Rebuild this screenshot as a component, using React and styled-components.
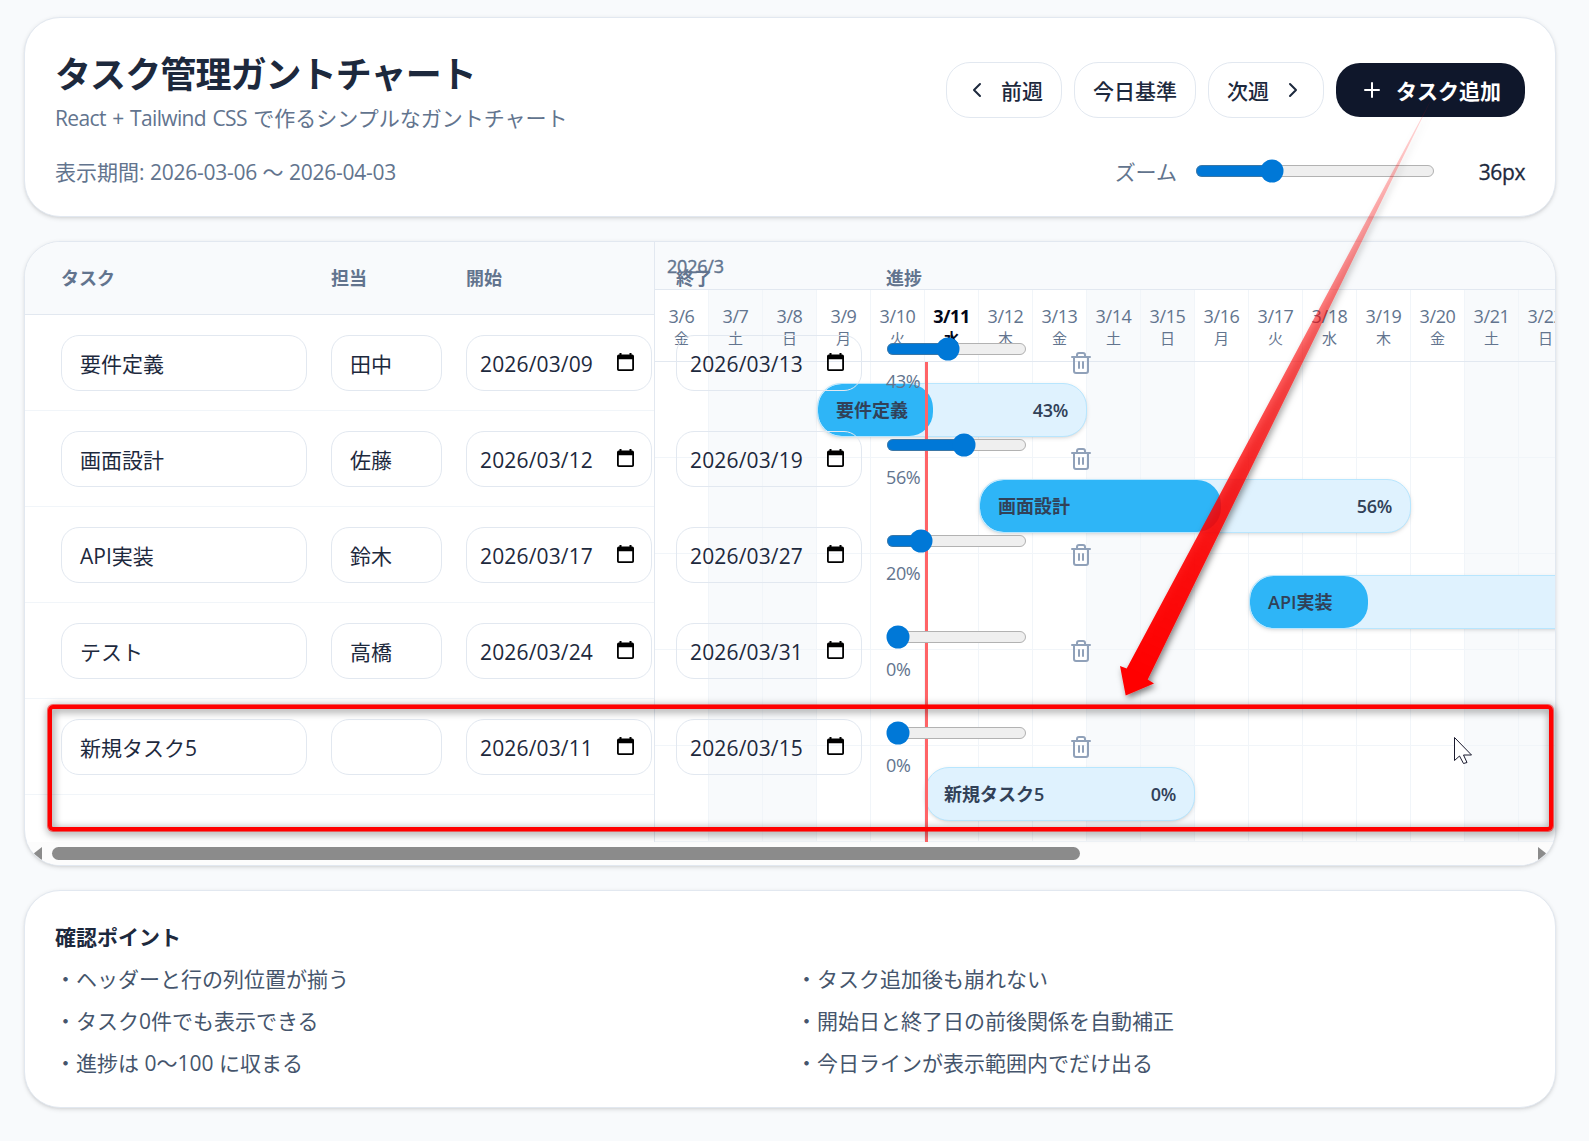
import { ChevronLeft, ChevronRight, Plus, Trash2 } from "lucide-react";
import styled, { createGlobalStyle, css } from "styled-components";

const DAY_WIDTH = 54;
const WEEKDAYS = ["日", "月", "火", "水", "木", "金", "土"];

const GlobalStyle = createGlobalStyle`
  * {
    box-sizing: border-box;
  }
  body {
    margin: 0;
    background-color: #f8fafc;
    color: #1d293d;
    font-family: "Open Sans", "Noto Sans CJK JP", sans-serif;
    font-size: 21px;
    line-height: 30px;
  }
`;

const Page = styled.main`
  position: relative;
  display: flex;
  flex-direction: column;
  gap: 24px;
  height: 1141px;
  padding: 17px 33px 0 24px;
  overflow: hidden;
`;

const Card = styled.section`
  flex-shrink: 0;
  background-color: #fff;
  border: 1px solid #e2e8f0;
  border-radius: 36px;
  box-shadow: 0 1.5px 4.5px rgba(0, 0, 0, 0.1),
    0 1.5px 3px -1.5px rgba(0, 0, 0, 0.1);
`;

const HeaderCard = styled(Card)`
  display: flex;
  flex-direction: column;
  gap: 24px;
  height: 200px;
  padding: 30px;
`;

const HeaderRow = styled.div`
  display: flex;
  align-items: center;
  justify-content: space-between;
`;

const Title = styled.h1`
  margin: 0;
  font-size: 36px;
  font-weight: 700;
  line-height: 54px;
  letter-spacing: -0.9px;
`;

const Muted = styled.p`
  margin: 0;
  padding-top: 2px;
  color: #62748e;
  line-height: 28px;
`;

const Latin = styled.span`
  letter-spacing: ${(props) => props.$spacing || "-0.25px"};
  word-spacing: ${(props) => props.$words || "0"};
`;

const Actions = styled.div`
  display: flex;
  align-items: center;
  gap: 12px;
`;

const Label = styled.span`
  padding-top: 2px;
  line-height: 28px;
`;

const Button = styled.button`
  display: flex;
  align-items: center;
  gap: 12px;
  height: 56px;
  padding: 0 18px;
  border: 1px solid #e2e8f0;
  border-radius: 24px;
  background-color: #fff;
  color: #1d293d;
  font: inherit;
  font-weight: 500;
  white-space: nowrap;

  ${(props) =>
    props.$primary &&
    css`
      height: 54px;
      padding: 0 24px;
      border: none;
      background-color: #0f172b;
      color: #fff;
      font-weight: 700;
    `}
`;

const ZoomControl = styled.div`
  display: flex;
  align-items: center;
  gap: 18px;
  color: #62748e;
`;

/* the native control is drawn at 150%, so width is given in unscaled pixels */
const Range = styled.input`
  zoom: 1.5;
  display: block;
  width: ${(props) => props.$width}px;
  height: 16px;
  margin: 0;
  accent-color: #0078d7;
`;

const ZoomValue = styled(Label)`
  width: 72px;
  text-align: right;
  font-weight: 500;
  letter-spacing: -0.4px;
  color: #1d293d;
  -webkit-text-stroke: 0.3px;
`;

const TableCard = styled(Card)`
  height: 625px;
  overflow: hidden;
`;

const Scroller = styled.div`
  display: flex;
  height: 600px;
  overflow: hidden;
`;

/* the task grid is wider than its panel and runs on over the chart */
const TaskPanel = styled.div`
  position: relative;
  z-index: 1;
  flex: 0 0 630px;
  min-width: 0;
  border-right: 1px solid #e2e8f0;
`;

const TaskGrid = styled.div`
  display: grid;
  grid-template-columns: 246px 111px 186px 186px 141px 60px;
  column-gap: 24px;
  align-items: center;
  padding-left: 36px;
`;

const TaskHeader = styled(TaskGrid)`
  height: 73px;
  border-bottom: 1px solid #e2e8f0;
  background-color: #f8fafc;
  color: #62748e;
  font-size: 18px;
  font-weight: 700;
`;

const TaskRow = styled(TaskGrid)`
  height: 96px;
  border-bottom: 1px solid #f1f5f9;
`;

const Field = styled.div`
  display: flex;
  align-items: center;
  height: 56px;
  padding: 2px 18px 0;
  border: 1px solid #e2e8f0;
  border-radius: 18px;
`;

const DateField = styled(Field)`
  justify-content: space-between;
  padding: 2px 17px 0 13px;
  letter-spacing: 0.15px;

  svg {
    margin-bottom: 3px;
  }
`;

const Progress = styled.div`
  display: flex;
  flex-direction: column;
  gap: 8px;
  padding: 5px 0 1px;
  color: #62748e;
  font-size: 18px;
  line-height: 24px;
`;

const DeleteButton = styled.button`
  display: flex;
  justify-content: center;
  padding: 0;
  border: none;
  background: none;
  color: #90a1b9;
`;

const Chart = styled.div`
  position: relative;
  flex-shrink: 0;
`;

const Month = styled.div`
  height: 48px;
  padding: 9px 12px 0;
  border-bottom: 1px solid #e2e8f0;
  background-color: #f8fafc;
  color: #62748e;
  font-size: 18px;
  font-weight: 500;
  letter-spacing: -0.2px;
  -webkit-text-stroke: 0.4px;
`;

const Days = styled.div`
  display: flex;
  height: 72px;
  border-bottom: 1px solid #e2e8f0;
`;

const Day = styled.div`
  display: flex;
  flex-direction: column;
  align-items: center;
  justify-content: center;
  width: ${DAY_WIDTH}px;
  border-right: 1px solid #f1f5f9;
  background-color: ${(props) => (props.$weekend ? "#f8fafc" : "#fff")};
  color: ${(props) => (props.$today ? "#020618" : "#62748e")};
  font-size: 18px;
  font-weight: ${(props) => (props.$today ? 700 : 400)};
  line-height: 24px;
  letter-spacing: -0.4px;

  small {
    font-size: 15px;
    line-height: 20px;
    letter-spacing: 0;
  }
`;

const ChartRow = styled.div`
  position: relative;
  display: flex;
  height: 96px;
  border-bottom: 1px solid #f1f5f9;
`;

const Cell = styled.div`
  width: ${DAY_WIDTH}px;
  border-right: 1px solid #f1f5f9;
  background-color: ${(props) => (props.$weekend ? "#f8fafc" : "#fff")};
`;

const Bar = styled.div`
  position: absolute;
  top: 21px;
  height: 54px;
  border: 1px solid #b8e6fe;
  border-radius: 24px;
  background-color: #dff2fe;
  box-shadow: 0 1.5px 4.5px rgba(0, 0, 0, 0.1),
    0 1.5px 3px -1.5px rgba(0, 0, 0, 0.1);
  overflow: hidden;
`;

const BarFill = styled.div`
  height: 100%;
  border-radius: 24px;
  background-color: #2eb5f7;
`;

const BarLabel = styled.div`
  position: absolute;
  inset: 0;
  display: flex;
  align-items: center;
  justify-content: space-between;
  padding: 0 18px;
  color: #314158;
  font-size: 18px;
  font-weight: 600;
  letter-spacing: -0.3px;

  b {
    font-weight: 600;
    letter-spacing: 0;
  }
`;

const TodayLine = styled.div`
  position: absolute;
  top: 120px;
  bottom: 0;
  left: ${5 * DAY_WIDTH}px;
  width: 3px;
  background-color: #ff6467;
`;

const Scrollbar = styled.div`
  display: flex;
  align-items: center;
  height: 23px;
  padding: 0 8px;
  background-color: #fcfcfc;
`;

const Thumb = styled.div`
  width: 1028px;
  height: 13px;
  margin: 0 auto 0 10px;
  border-radius: 6.5px;
  background-color: #8b8b8b;
`;

const NotesCard = styled(Card)`
  height: 218px;
  padding: 31px 30px 0;
`;

const NotesTitle = styled.h2`
  margin: 0 0 12px;
  font-size: 21px;
  font-weight: 700;
`;

const Notes = styled.div`
  display: grid;
  grid-template-columns: 1fr 1fr;
  gap: 12px;
  color: #45556c;
`;

const Highlight = styled.div`
  position: absolute;
  top: 705px;
  left: 48px;
  width: 1505px;
  height: 126px;
  border: 4px solid #ff0000;
  border-radius: 5px;
  box-shadow: 0 0 0 1px rgba(255, 0, 0, 0.55);
  filter: drop-shadow(1px 2px 4px rgba(0, 0, 0, 0.55));
  z-index: 2;
`;

const Annotations = styled.svg`
  position: absolute;
  top: 0;
  left: 0;
  z-index: 3;
  pointer-events: none;
`;

const days = Array.from({ length: 17 }, (_, i) => ({
  label: `3/${6 + i}`,
  weekday: WEEKDAYS[(5 + i) % 7],
  weekend: (5 + i) % 7 === 0 || (5 + i) % 7 === 6,
  today: i === 5,
}));

const tasks = [
  { name: "要件定義", owner: "田中", start: "2026/03/09", end: "2026/03/13", progress: 43, offset: 3, length: 5 },
  { name: "画面設計", owner: "佐藤", start: "2026/03/12", end: "2026/03/19", progress: 56, offset: 6, length: 8 },
  { name: "API実装", owner: "鈴木", start: "2026/03/17", end: "2026/03/27", progress: 20, offset: 11, length: 11 },
  { name: "テスト", owner: "高橋", start: "2026/03/24", end: "2026/03/31", progress: 0, offset: 18, length: 8 },
  { name: "新規タスク5", owner: "", start: "2026/03/11", end: "2026/03/15", progress: 0, offset: 5, length: 5 },
];

const notes = [
  "・ヘッダーと行の列位置が揃う",
  "・タスク追加後も崩れない",
  "・タスク0件でも表示できる",
  "・開始日と終了日の前後関係を自動補正",
  "・進捗は 0〜100 に収まる",
  "・今日ラインが表示範囲内でだけ出る",
];

function CalendarIcon() {
  return (
    <svg width="17" height="18" viewBox="0 0 17 18">
      <path
        fill="#000"
        fillRule="evenodd"
        d="M2.5 0h2v1.5h8V0h2v1.5h.7A1.8 1.8 0 0 1 17 3.3v12.9a1.8 1.8 0 0 1-1.8 1.8H1.8A1.8 1.8 0 0 1 0 16.2V3.3a1.8 1.8 0 0 1 1.8-1.8h.7zM1.8 6.2v10h13.4v-10z"
      />
    </svg>
  );
}

function DateInput({ value }) {
  return (
    <DateField>
      <span>{value}</span>
      <CalendarIcon />
    </DateField>
  );
}

function Header() {
  return (
    <HeaderCard>
      <HeaderRow>
        <div>
          <Title>タスク管理ガントチャート</Title>
          <Muted>
            <Latin $spacing="-0.65px" $words="1.7px">
              React + Tailwind CSS{" "}
            </Latin>
            で作るシンプルなガントチャート
          </Muted>
        </div>
        <Actions>
          <Button>
            <ChevronLeft size={24} />
            <Label>前週</Label>
          </Button>
          <Button>
            <Label>今日基準</Label>
          </Button>
          <Button>
            <Label>次週</Label>
            <ChevronRight size={24} />
          </Button>
          <Button $primary>
            <Plus size={24} />
            <Label>タスク追加</Label>
          </Button>
        </Actions>
      </HeaderRow>
      <HeaderRow>
        <Muted>
          表示期間: <Latin>2026-03-06</Latin> 〜 <Latin>2026-04-03</Latin>
        </Muted>
        <ZoomControl>
          <Label>ズーム</Label>
          <Range type="range" min="24" max="64" defaultValue="36" $width={160} />
          <ZoomValue>36px</ZoomValue>
        </ZoomControl>
      </HeaderRow>
    </HeaderCard>
  );
}

function TaskList() {
  return (
    <TaskPanel>
      <TaskHeader>
        <span>タスク</span>
        <span>担当</span>
        <span>開始</span>
        <span>終了</span>
        <span>進捗</span>
      </TaskHeader>
      {tasks.map((task) => (
        <TaskRow key={task.name}>
          <Field>{task.name}</Field>
          <Field>{task.owner}</Field>
          <DateInput value={task.start} />
          <DateInput value={task.end} />
          <Progress>
            <Range type="range" defaultValue={task.progress} $width={94} />
            <Latin $spacing="-0.4px">{task.progress}%</Latin>
          </Progress>
          <DeleteButton>
            <Trash2 size={24} />
          </DeleteButton>
        </TaskRow>
      ))}
    </TaskPanel>
  );
}

function Timeline() {
  return (
    <Chart>
      <Month>2026/3</Month>
      <Days>
        {days.map((day) => (
          <Day key={day.label} $weekend={day.weekend} $today={day.today}>
            {day.label}
            <small>{day.weekday}</small>
          </Day>
        ))}
      </Days>
      {tasks.map((task) => (
        <ChartRow key={task.name}>
          {days.map((day) => (
            <Cell key={day.label} $weekend={day.weekend} />
          ))}
          {task.offset < days.length && (
            <Bar
              style={{
                left: task.offset * DAY_WIDTH,
                width: task.length * DAY_WIDTH,
              }}
            >
              <BarFill style={{ width: `${task.progress}%` }} />
              <BarLabel>
                <b>{task.name}</b>
                {task.offset + task.length <= days.length && (
                  <span>{task.progress}%</span>
                )}
              </BarLabel>
            </Bar>
          )}
        </ChartRow>
      ))}
      <TodayLine />
    </Chart>
  );
}

function App() {
  return (
    <>
      <GlobalStyle />
      <Page>
        <Header />
        <TableCard>
          <Scroller>
            <TaskList />
            <Timeline />
          </Scroller>
          <Scrollbar>
            <svg width="9" height="14" viewBox="0 0 9 14">
              <path d="M9 0v14L0 7z" fill="#8b8b8b" />
            </svg>
            <Thumb />
            <svg width="9" height="14" viewBox="0 0 9 14">
              <path d="M0 0v14l9-7z" fill="#8b8b8b" />
            </svg>
          </Scrollbar>
        </TableCard>
        <NotesCard>
          <NotesTitle>確認ポイント</NotesTitle>
          <Notes>
            {notes.map((note) => (
              <div key={note}>{note}</div>
            ))}
          </Notes>
        </NotesCard>
        <Highlight />
        <Annotations width="1589" height="1141" viewBox="0 0 1589 1141">
          <defs>
            <linearGradient
              id="arrow"
              gradientUnits="userSpaceOnUse"
              x1="1431"
              y1="98"
              x2="1137"
              y2="674"
            >
              <stop offset="0" stopColor="#f00" stopOpacity="0.12" />
              <stop offset="0.25" stopColor="#f00" stopOpacity="0.38" />
              <stop offset="0.5" stopColor="#f00" stopOpacity="0.64" />
              <stop offset="0.8" stopColor="#f00" stopOpacity="0.9" />
              <stop offset="1" stopColor="#f00" />
            </linearGradient>
            <filter id="shadow" x="-10%" y="-10%" width="120%" height="120%">
              <feDropShadow dx="2" dy="3" stdDeviation="3" floodOpacity="0.5" />
            </filter>
          </defs>
          <path
            d="M1432 98L1126.7 668.5 1120 666l5.700 29.500L1154 683.500l-6.300-4z"
            fill="url(#arrow)"
            filter="url(#shadow)"
          />
          <path
            d="M1454.5 737.5v23l5-4.5 4 7.5 3.5-1-3.5-7.5h8z"
            fill="#fff"
            stroke="#1a1a2e"
          />
        </Annotations>
      </Page>
    </>
  );
}

export default App;
